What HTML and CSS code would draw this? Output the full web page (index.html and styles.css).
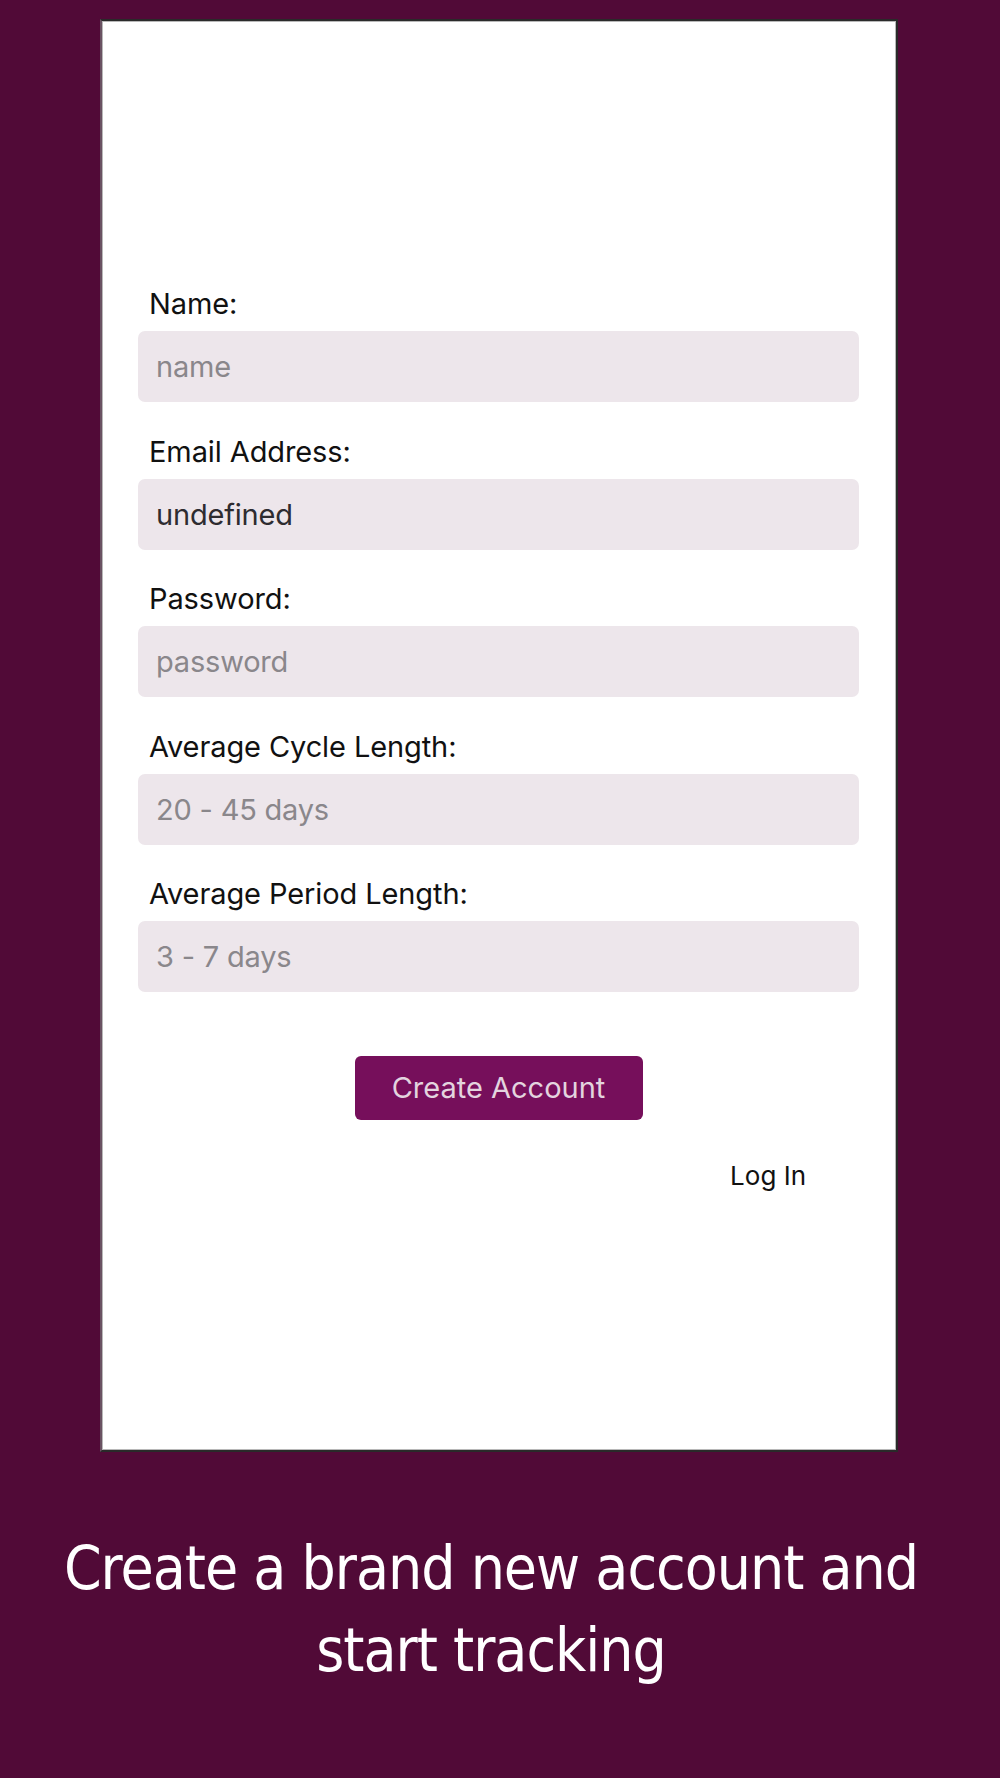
FILE: index.html
```html
<!DOCTYPE html>
<html lang="en">

<head>
    <meta charset="UTF-8">
    <meta name="viewport" content="width=device-width, initial-scale=1.0">
    <title>Create Account</title>
    <link rel="stylesheet" href="styles.css">
</head>

<body>
    <div class="screen">
        <form class="signup">
            <div class="field">
                <label for="name">Name:</label>
                <input id="name" type="text" placeholder="name">
            </div>
            <div class="field">
                <label for="email">Email Address:</label>
                <input id="email" type="text" value="undefined">
            </div>
            <div class="field">
                <label for="password">Password:</label>
                <input id="password" type="password" placeholder="password">
            </div>
            <div class="field">
                <label for="cycle">Average Cycle Length:</label>
                <input id="cycle" type="text" placeholder="20 - 45 days">
            </div>
            <div class="field">
                <label for="period">Average Period Length:</label>
                <input id="period" type="text" placeholder="3 - 7 days">
            </div>

            <button type="button" class="create">Create Account</button>
            <div class="login-row">
                <a class="login" href="#">Log In</a>
            </div>
        </form>
    </div>

    <p class="caption">Create a brand new account and start tracking</p>
</body>

</html>
```

FILE: styles.css
```css
* {
    margin: 0;
    padding: 0;
    box-sizing: border-box;
}

body {
    background-color: #510a37;
    font-family: Inter, "Noto Sans", sans-serif;
    min-height: 100vh;
    padding-top: 19px;
}

.screen {
    width: 798px;
    height: 1433px;
    margin-left: 100px;
    background-color: #fff;
    border: 2px solid #2a2a2a;
    border-left-color: #6a5262;
    box-shadow: inset 0 0 0 1px #b8b8b8;
}

.signup {
    display: flex;
    flex-direction: column;
    padding: 266px 37px 0 36px;
}

.field {
    display: flex;
    flex-direction: column;
    gap: 10px;
    margin-bottom: 32.5px;
}

.field label {
    font-size: 29px;
    line-height: 34px;
    color: #111;
    padding-left: 11px;
    letter-spacing: -0.1px;
}

.field input {
    height: 71px;
    border: none;
    outline: none;
    border-radius: 7px;
    background-color: #ede6eb;
    padding: 0 18px;
    font-family: Inter, "Noto Sans", sans-serif;
    font-size: 29px;
    color: #2e2c30;
    letter-spacing: -0.2px;
}

.field input::placeholder {
    color: #8a878b;
}

.create {
    align-self: center;
    width: 288px;
    height: 64px;
    margin-top: 31px;
    border: none;
    border-radius: 6px;
    background-color: #760f5b;
    color: #e3d4df;
    font-family: Inter, "Noto Sans", sans-serif;
    font-size: 29px;
    cursor: pointer;
}

.login-row {
    display: flex;
    justify-content: flex-end;
    padding-right: 53px;
    margin-top: 41px;
}

.login {
    font-size: 26px;
    line-height: 30px;
    color: #111;
    text-decoration: none;
}

.caption {
    width: 960px;
    margin: 75px auto 0;
    padding-right: 18px;
    text-align: center;
    color: #fff;
    font-family: "DejaVu Sans Condensed", "DejaVu Sans", sans-serif;
    font-stretch: condensed;
    font-size: 60px;
    line-height: 82px;
    letter-spacing: -1px;
}
```
